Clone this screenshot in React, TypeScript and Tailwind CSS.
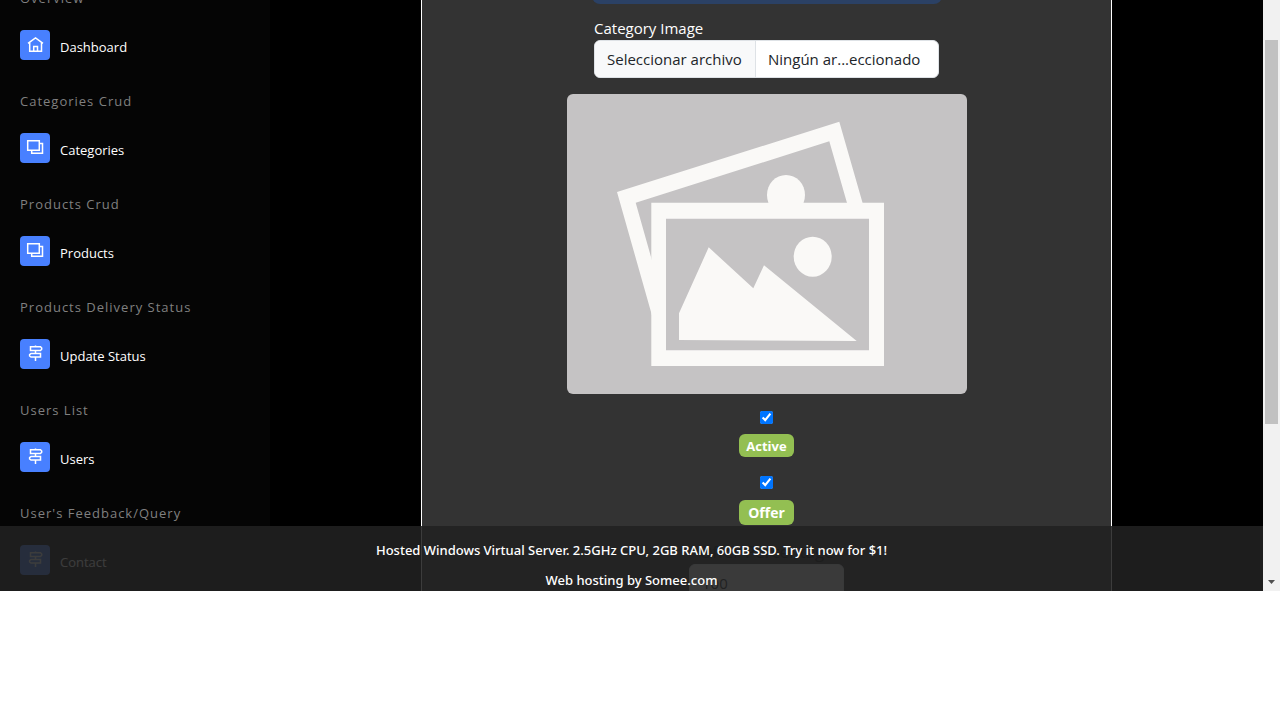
import type { ReactNode } from "react";

function HomeIcon() {
  return (
    <>
      <path d="M2 8.3 9.5 3 17 8.3" />
      <path d="M3.7 7.5v8.8h11.8V7.5" />
      <path d="M7.7 16v-4.6h3.8V16" />
    </>
  );
}

function WindowsIcon() {
  return (
    <>
      <path d="M1.7 2.7h11.6v9.6H1.7z" />
      <path d="M13.3 5.5h3.2v9.8H5.7v-3" />
    </>
  );
}

function SignpostIcon() {
  return (
    <>
      <path d="M9.5 1.4v1.4M9.5 6.5v3M9.5 13V17" />
      <path d="M4.5 2.8h10l1.2 1.2v1.3l-1.2 1.2h-10z" />
      <path d="M14.5 9.5h-9.5l-1.4 1.1v1.3L5 13h9.5z" />
    </>
  );
}

const sections: { heading: string; item: string; icon: ReactNode }[] = [
  { heading: "Overview", item: "Dashboard", icon: <HomeIcon /> },
  { heading: "Categories Crud", item: "Categories", icon: <WindowsIcon /> },
  { heading: "Products Crud", item: "Products", icon: <WindowsIcon /> },
  { heading: "Products Delivery Status", item: "Update Status", icon: <SignpostIcon /> },
  { heading: "Users List", item: "Users", icon: <SignpostIcon /> },
  { heading: "User's Feedback/Query", item: "Contact", icon: <SignpostIcon /> },
];

function Sidebar() {
  return (
    <nav className="w-[270px] shrink-0 overflow-hidden bg-[#050505] px-5">
      <div className="-mt-3 flex flex-col gap-[31px]">
        {sections.map((s) => (
          <section key={s.heading}>
            <h2 className="mb-[22px] text-[13px] leading-5 tracking-[1px] text-[#808080]">{s.heading}</h2>
            <a href="#" className="flex items-end gap-2.5 text-[13px] leading-[26px] text-white">
              <span className="flex size-[30px] items-start justify-center rounded bg-[#4880ff] pt-[5px]">
                <svg viewBox="0 0 18 18" className="size-[18px] fill-none stroke-white stroke-[1.5]" aria-hidden="true">
                  {s.icon}
                </svg>
              </span>
              {s.item}
            </a>
          </section>
        ))}
      </div>
    </nav>
  );
}

function PlaceholderImage() {
  return (
    <svg viewBox="0 0 400 300" className="mt-4 h-[300px] w-[400px] shrink-0 rounded-md bg-[#c5c3c4]" role="img" aria-label="Category preview">
      <g fill="#faf9f7">
        <path d="M50 98 272.3 27.7 295.9 110h-15.6L262.3 47.3 68.7 108.7 86 170v55z" />
        <ellipse cx="219" cy="101" rx="19" ry="20" />
        <path fillRule="evenodd" d="M84.3 108.7H317V272H84.3zM99 124.7V256.2h203V124.7z" />
        <ellipse cx="245.7" cy="162.7" rx="19" ry="20" />
        <path d="M112 219.3 141.7 153.3 186.3 194.3 197 171.3 289.7 247 112 246z" />
      </g>
    </svg>
  );
}

function CategoryForm() {
  return (
    <form className="mx-[151px] flex flex-1 flex-col items-center overflow-hidden border-x border-white bg-[#333]">
      <div className="-mt-[34px] h-[38px] w-[350px] shrink-0 rounded-lg bg-[#2b4165]" />
      <label htmlFor="image" className="mt-[13px] w-[345px] text-[15px] leading-[23px] text-white">
        Category Image
      </label>
      <label
        htmlFor="image"
        className="flex h-[38px] w-[345px] shrink-0 items-stretch overflow-hidden rounded-md border border-[#dee2e6] bg-white text-[15px] leading-9 text-[#212529]"
      >
        <span className="w-[161px] shrink-0 border-r border-[#dee2e6] bg-[#f8f9fa] pl-3 whitespace-nowrap">
          Seleccionar archivo
        </span>
        <span className="pl-3 whitespace-nowrap">Ningún ar...eccionado</span>
        <input id="image" type="file" className="sr-only" />
      </label>
      <PlaceholderImage />
      <input id="active" type="checkbox" defaultChecked className="mt-[17px] size-[13px] shrink-0" />
      <label htmlFor="active" className="mt-2.5 h-[23px] w-[55px] shrink-0 rounded-md bg-[#93bf52] text-center text-[13px] leading-6 font-bold text-white">
        Active
      </label>
      <input id="offer" type="checkbox" defaultChecked className="mt-[19px] size-[13px] shrink-0" />
      <label htmlFor="offer" className="mt-[11px] h-[25px] w-[55px] shrink-0 rounded-md bg-[#93bf52] text-center text-[14px] leading-[25px] font-bold text-white">
        Offer
      </label>
      <label htmlFor="percentage" className="mt-3.5 text-[17px] leading-[25px] text-black">
        Offer Percentage
      </label>
      <input
        id="percentage"
        type="text"
        defaultValue="100"
        className="h-[38px] w-[155px] shrink-0 rounded-md border border-[#dee2e6] bg-[#e9ecef] px-3 text-[15px] text-[#212529]"
      />
    </form>
  );
}

function Scrollbar() {
  return (
    <div className="flex w-[17px] shrink-0 flex-col items-center justify-between bg-[#f1f1f1] pt-10 pb-[7px]" aria-hidden="true">
      <div className="h-[384px] w-[13px] bg-[#c1c1c1]" />
      <svg viewBox="0 0 7 4" className="h-1 w-[7px] fill-[#505050]">
        <path d="M0 0h7L3.5 4z" />
      </svg>
    </div>
  );
}

export default function App() {
  return (
    <div className="min-h-screen bg-white font-['Open_Sans','Noto_Sans',sans-serif]">
      <div className="flex h-[calc(100vh-129px)] overflow-hidden bg-black">
        <div className="relative flex min-w-0 flex-1 overflow-hidden">
          <Sidebar />
          <main className="flex min-w-0 flex-1">
            <CategoryForm />
          </main>
          <footer className="absolute inset-x-0 bottom-0 flex h-[65px] flex-col items-center bg-[#212121]/88 pt-[9px] font-['Noto_Sans','Open_Sans',sans-serif] text-[13px] leading-[30px] font-medium whitespace-nowrap text-white">
            <a href="#">Hosted Windows Virtual Server. 2.5GHz CPU, 2GB RAM, 60GB SSD. Try it now for $1!</a>
            <a href="#">Web hosting by Somee.com</a>
          </footer>
        </div>
        <Scrollbar />
      </div>
    </div>
  );
}
